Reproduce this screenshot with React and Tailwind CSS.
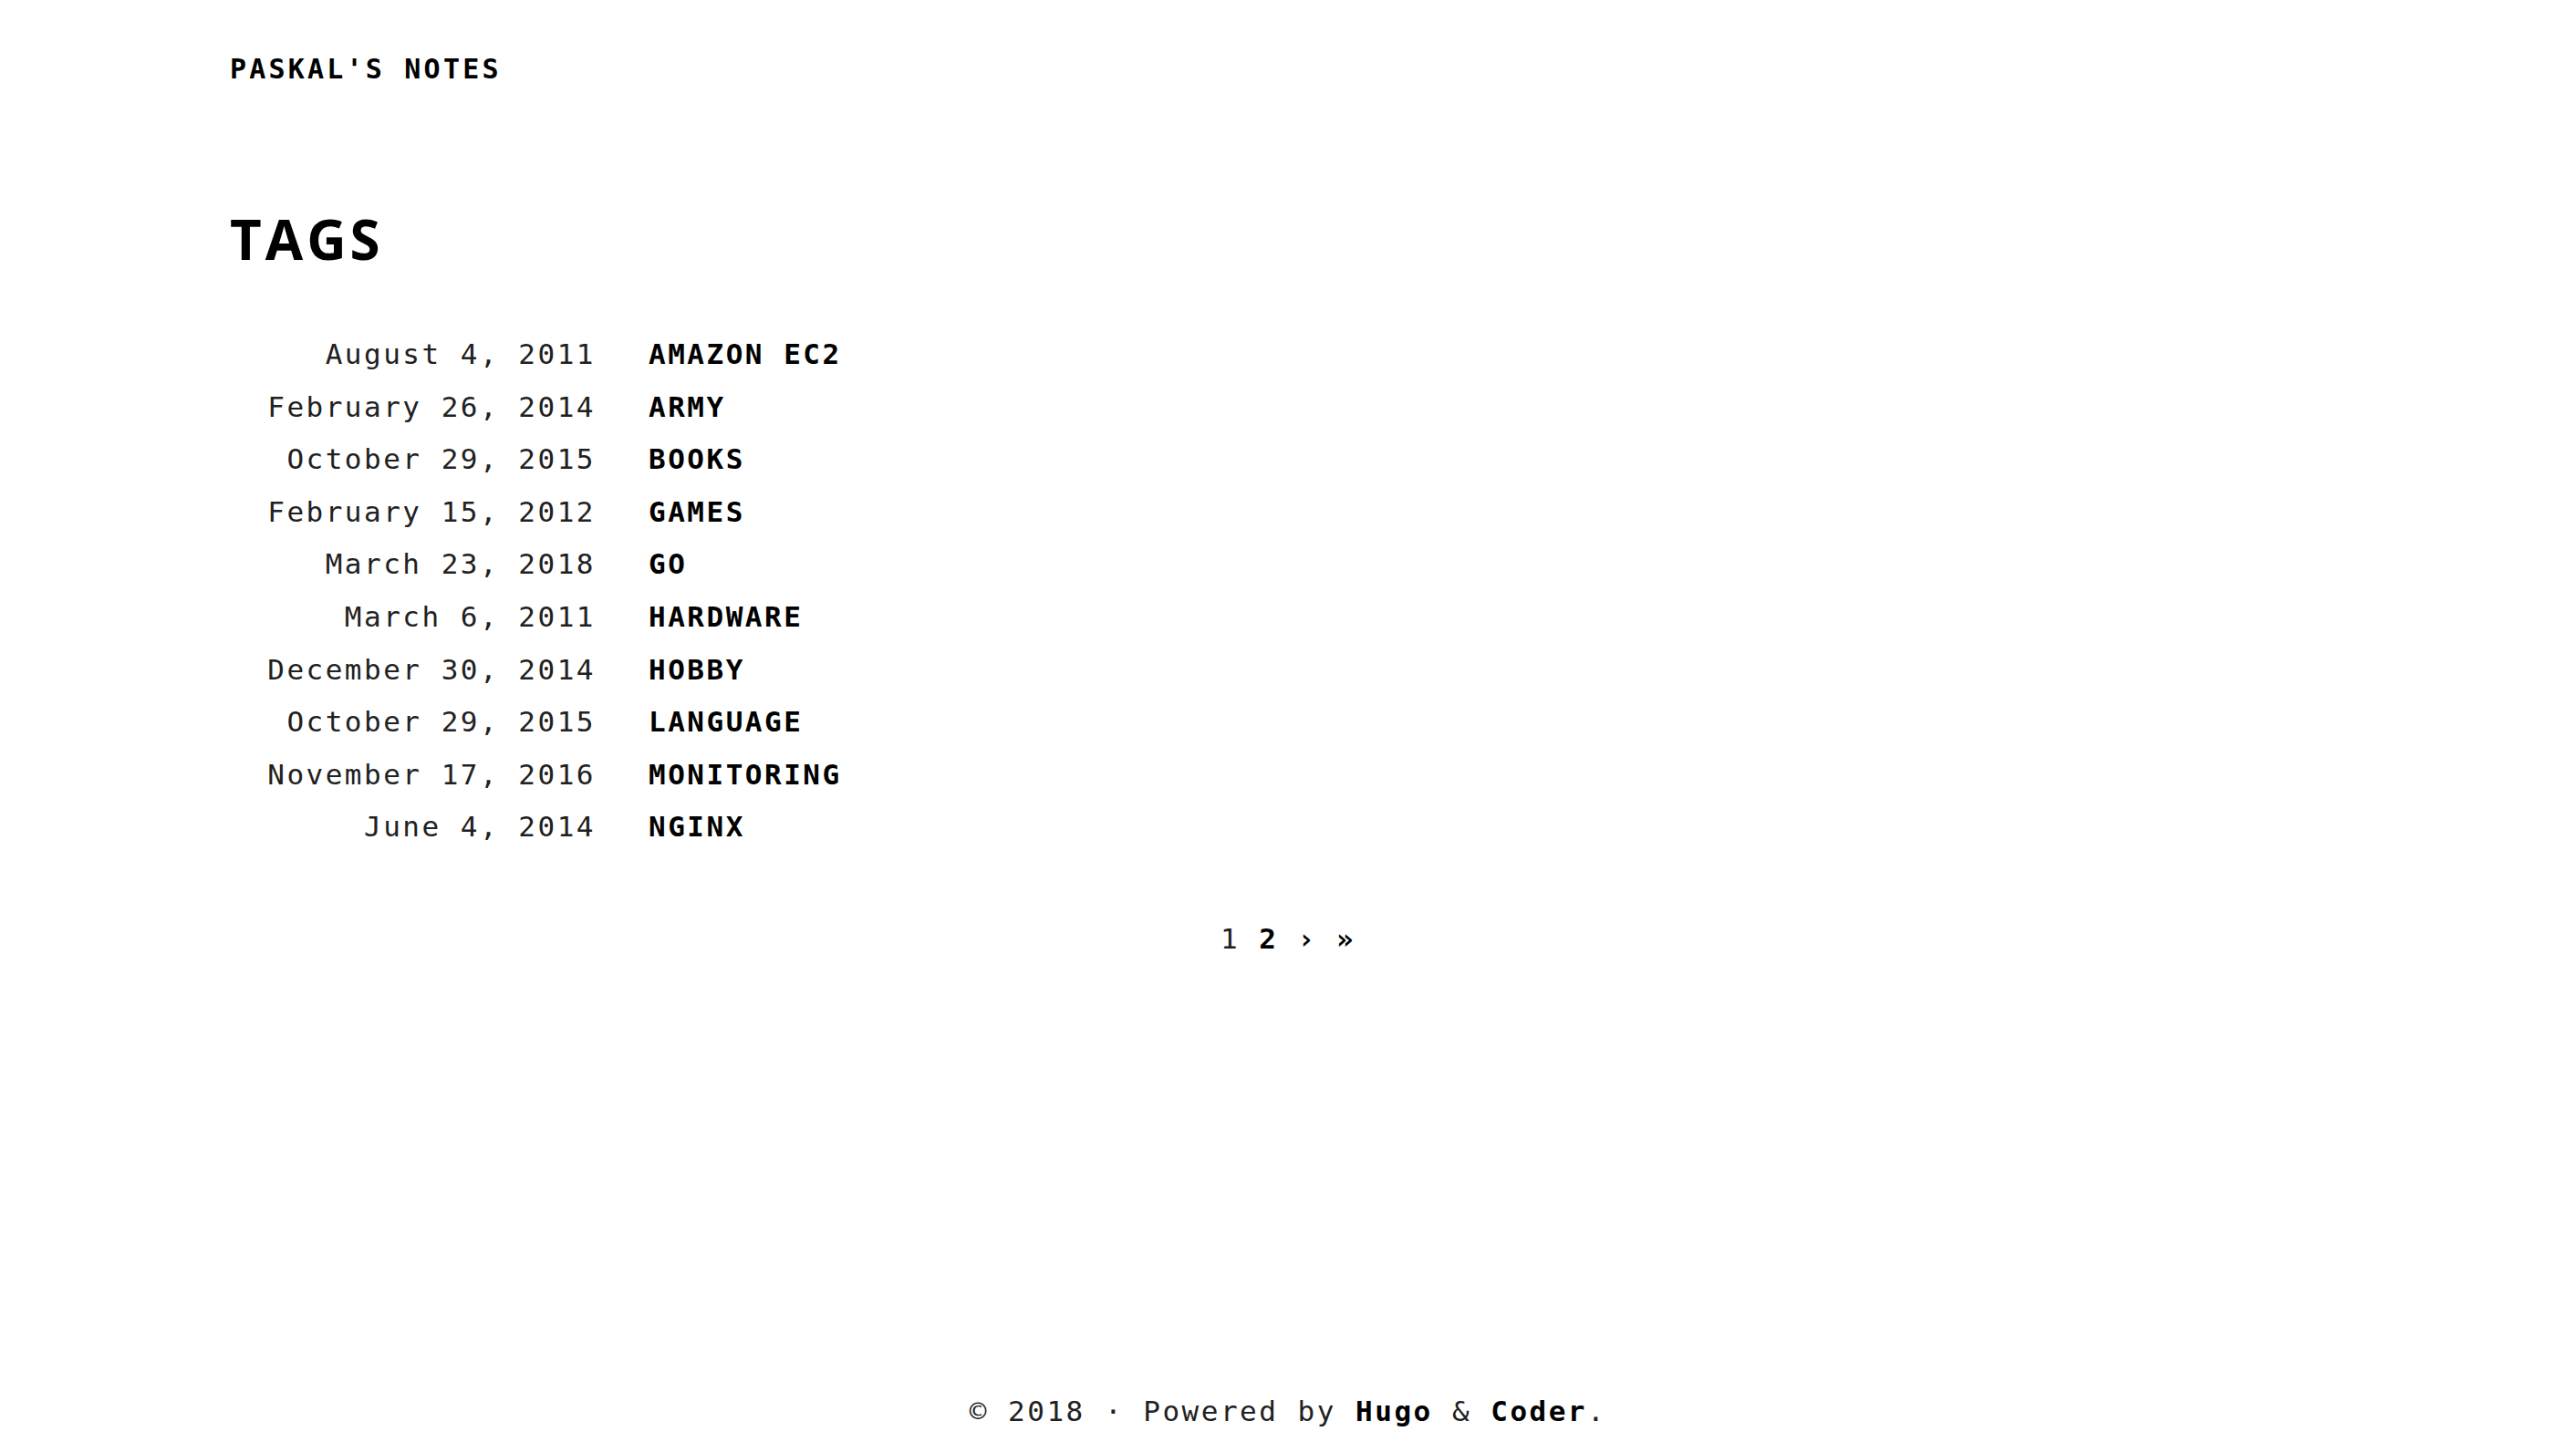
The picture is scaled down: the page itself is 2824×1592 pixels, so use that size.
import React from "react";

// タグ一覧（日付は各タグの最新記事）
const tags = [
  ["August 4, 2011", "Amazon EC2"],
  ["February 26, 2014", "Army"],
  ["October 29, 2015", "Books"],
  ["February 15, 2012", "Games"],
  ["March 23, 2018", "Go"],
  ["March 6, 2011", "Hardware"],
  ["December 30, 2014", "Hobby"],
  ["October 29, 2015", "Language"],
  ["November 17, 2016", "Monitoring"],
  ["June 4, 2014", "Nginx"]
];

export default function App() {
  return (
    <div className="min-h-screen flex flex-col bg-white text-[#212121] font-['DejaVu_Sans_Mono',monospace] text-[31px] tracking-[2.5px]">
      {/* ヘッダー */}
      <nav className="h-[152px] flex items-center px-[252px]">
        <a href="#" className="text-[30px] leading-none font-bold uppercase tracking-[3.2px] text-black">
          Paskal's Notes
        </a>
      </nav>

      <main className="flex-1 px-[252px]">
        <h1 className="mt-[80px] h-[60px] leading-none text-[60px] font-bold uppercase tracking-[4px] text-black font-['Open_Sans',sans-serif]">
          Tags
        </h1>

        <ul className="mt-[68px]">
          {tags.map(([date, name]) => (
            <li key={name} className="flex h-[57.6px] leading-[57.6px]">
              <span className="w-[401px] shrink-0 text-right">{date}</span>
              <a href="#" className="ml-[58px] font-bold uppercase text-black">
                {name}
              </a>
            </li>
          ))}
        </ul>

        {/* ページネーション */}
        <div className="mt-[65px] leading-[57.6px] text-center">
          <span>1</span>{" "}
          <a href="#" className="font-bold text-black">2</a>{" "}
          <a href="#" className="font-bold text-black">›</a>{" "}
          <a href="#" className="font-bold text-black">»</a>
        </div>
      </main>

      <footer className="pb-[15px] leading-[57.6px] text-center">
        © 2018 · Powered by{" "}
        <a href="#" className="font-bold text-black">Hugo</a> &amp;{" "}
        <a href="#" className="font-bold text-black">Coder</a>.
      </footer>
    </div>
  );
}
